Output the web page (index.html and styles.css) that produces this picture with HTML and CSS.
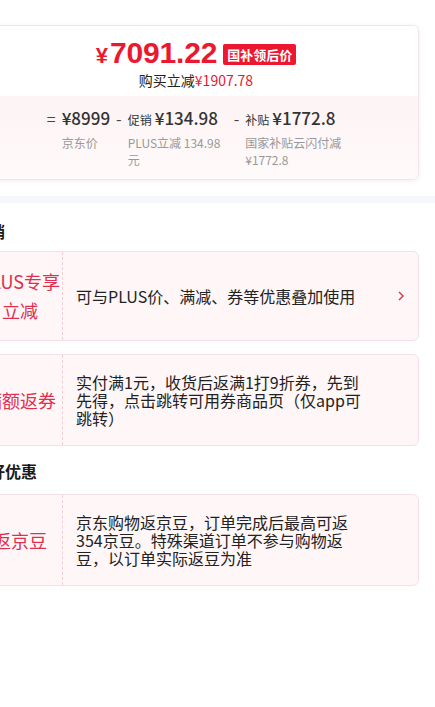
FILE: index.html
```html
<!doctype html>
<html>
<head>
<meta charset="utf-8">
<title>优惠明细</title>
<link rel="stylesheet" href="styles.css">
</head>
<body>
<div class="page">
    <!-- 价格卡片 -->
    <div class="price-card">
        <div class="price-main">
            <div class="price-line">
                <span class="yen">¥</span><span class="num">7091.22</span>
                <span class="tag">国补领后价</span>
            </div>
            <div class="save">购买立减<em>¥1907.78</em></div>
        </div>
        <div class="price-calc">
            <div class="calc-item">
                <span class="op">=</span>
                <div class="calc-body">
                    <div class="calc-val">¥8999</div>
                    <div class="calc-desc">京东价</div>
                </div>
            </div>
            <div class="calc-item">
                <span class="op">-</span>
                <div class="calc-body">
                    <div class="calc-val"><small>促销</small>¥134.98</div>
                    <div class="calc-desc">PLUS立减 134.98元</div>
                </div>
            </div>
            <div class="calc-item">
                <span class="op">-</span>
                <div class="calc-body">
                    <div class="calc-val"><small>补贴</small>¥1772.8</div>
                    <div class="calc-desc">国家补贴云闪付减¥1772.8</div>
                </div>
            </div>
        </div>
    </div>

    <div class="band"></div>

    <!-- 促销 -->
    <h3 class="sec-title first">促销</h3>
    <div class="promo">
        <div class="promo-label">PLUS专享<br>立减</div>
        <div class="promo-text">可与PLUS价、满减、券等优惠叠加使用</div>
        <svg class="promo-arrow" width="6" height="10" viewBox="0 0 6 10"><polyline points="1,1 5,5 1,9" fill="none" stroke="#d9304e" stroke-width="1.4"/></svg>
    </div>
    <div class="promo">
        <div class="promo-label">满额返券</div>
        <div class="promo-text">实付满1元，收货后返满1打9折券，先到先得，点击跳转可用券商品页（仅app可跳转）</div>
    </div>

    <h3 class="sec-title">更好优惠</h3>
    <div class="promo">
        <div class="promo-label">返京豆</div>
        <div class="promo-text">京东购物返京豆，订单完成后最高可返354京豆。特殊渠道订单不参与购物返豆，以订单实际返豆为准</div>
    </div>
</div>
</body>
</html>
```

FILE: styles.css
```css
body{
    margin: 0;
    background: #fff;
    font-family: "Noto Sans CJK SC", sans-serif;
    color: #222;
    overflow: hidden;
}

/* 整体向左偏出屏幕 */
.page{
    margin-left: -27px;
    width: 462px;
    padding-top: 25px;
}

/* 价格卡片 */
.price-card{
    margin-right: 16px;
    border: 1px solid #f1e5e7;
    border-radius: 6px;
    box-shadow: 0 1px 4px rgba(220, 200, 205, 0.35);
    overflow: hidden;
}
.price-main{
    padding: 9px 0 7px;
    text-align: center;
    background: #fff;
}
.price-line{
    display: flex;
    justify-content: center;
    align-items: baseline;
    height: 36px;
    line-height: 36px;
    color: #ec1830;
    font-family: "Liberation Sans", sans-serif;
    font-weight: bold;
}
.price-line .yen{
    font-size: 22px;
    margin-right: 2px;
}
.price-line .num{
    font-size: 30px;
    letter-spacing: -0.2px;
}
.price-line .tag{
    align-self: center;
    margin: 2px 0 0 6px;
    padding: 0 4px;
    height: 21px;
    line-height: 21px;
    background: #ec1830;
    color: #fff;
    font-family: "Noto Sans CJK SC", sans-serif;
    font-size: 13px;
    border-radius: 2px;
}
.save{
    font-size: 14px;
    line-height: 18px;
    color: #222;
}
.save em{
    font-style: normal;
    color: #ec1830;
}

.price-calc{
    display: flex;
    justify-content: center;
    padding: 10px 0 11px;
    background: linear-gradient(to bottom, #fdf3f4 0%, #fffafa 100%);
}
.calc-item{
    display: flex;
    align-items: flex-start;
    margin-right: 6px;
}
.calc-item:last-child{
    margin-right: 0;
}
.calc-item .op{
    margin-right: 6px;
    line-height: 24px;
    font-size: 16px;
    color: #444;
}
.calc-body{
    max-width: 100px;
}
.calc-val{
    height: 24px;
    line-height: 24px;
    font-size: 17px;
    font-weight: 500;
    color: #333;
    white-space: nowrap;
}
.calc-val small{
    font-size: 12px;
    line-height: 1;
    font-weight: normal;
    margin-right: 3px;
}
.calc-desc{
    margin-top: 4px;
    font-size: 12px;
    line-height: 17px;
    color: #999;
}

.band{
    height: 7px;
    margin-top: 16px;
    background: #f6f7fb;
}

/* 优惠行 */
.sec-title{
    margin: 11px 0;
    font-size: 16px;
    line-height: 24px;
    font-weight: bold;
    color: #1a1a1a;
}
.sec-title.first{
    margin: 16px 0 8px;
}
.promo{
    display: flex;
    align-items: stretch;
    min-height: 88px;
    margin: 0 16px 13px 0;
    background: #fef6f7;
    border: 1px solid #f5e1e5;
    border-radius: 6px;
}
.promo-label{
    flex: 0 0 89px;
    display: flex;
    align-items: center;
    justify-content: center;
    padding: 0 0 0 4px;
    box-sizing: border-box;
    border-right: 1px dashed #f1cdd4;
    text-align: center;
    white-space: nowrap;
    font-size: 18px;
    line-height: 29px;
    color: #de2f4f;
}
.promo-text{
    flex: 1;
    align-self: center;
    padding: 18px 12px 18px 13px;
    font-size: 16px;
    line-height: 18px;
    color: #222;
    max-width: 286px;
}
.promo-arrow{
    align-self: center;
    margin: 0 14px 0 auto;
}
```
